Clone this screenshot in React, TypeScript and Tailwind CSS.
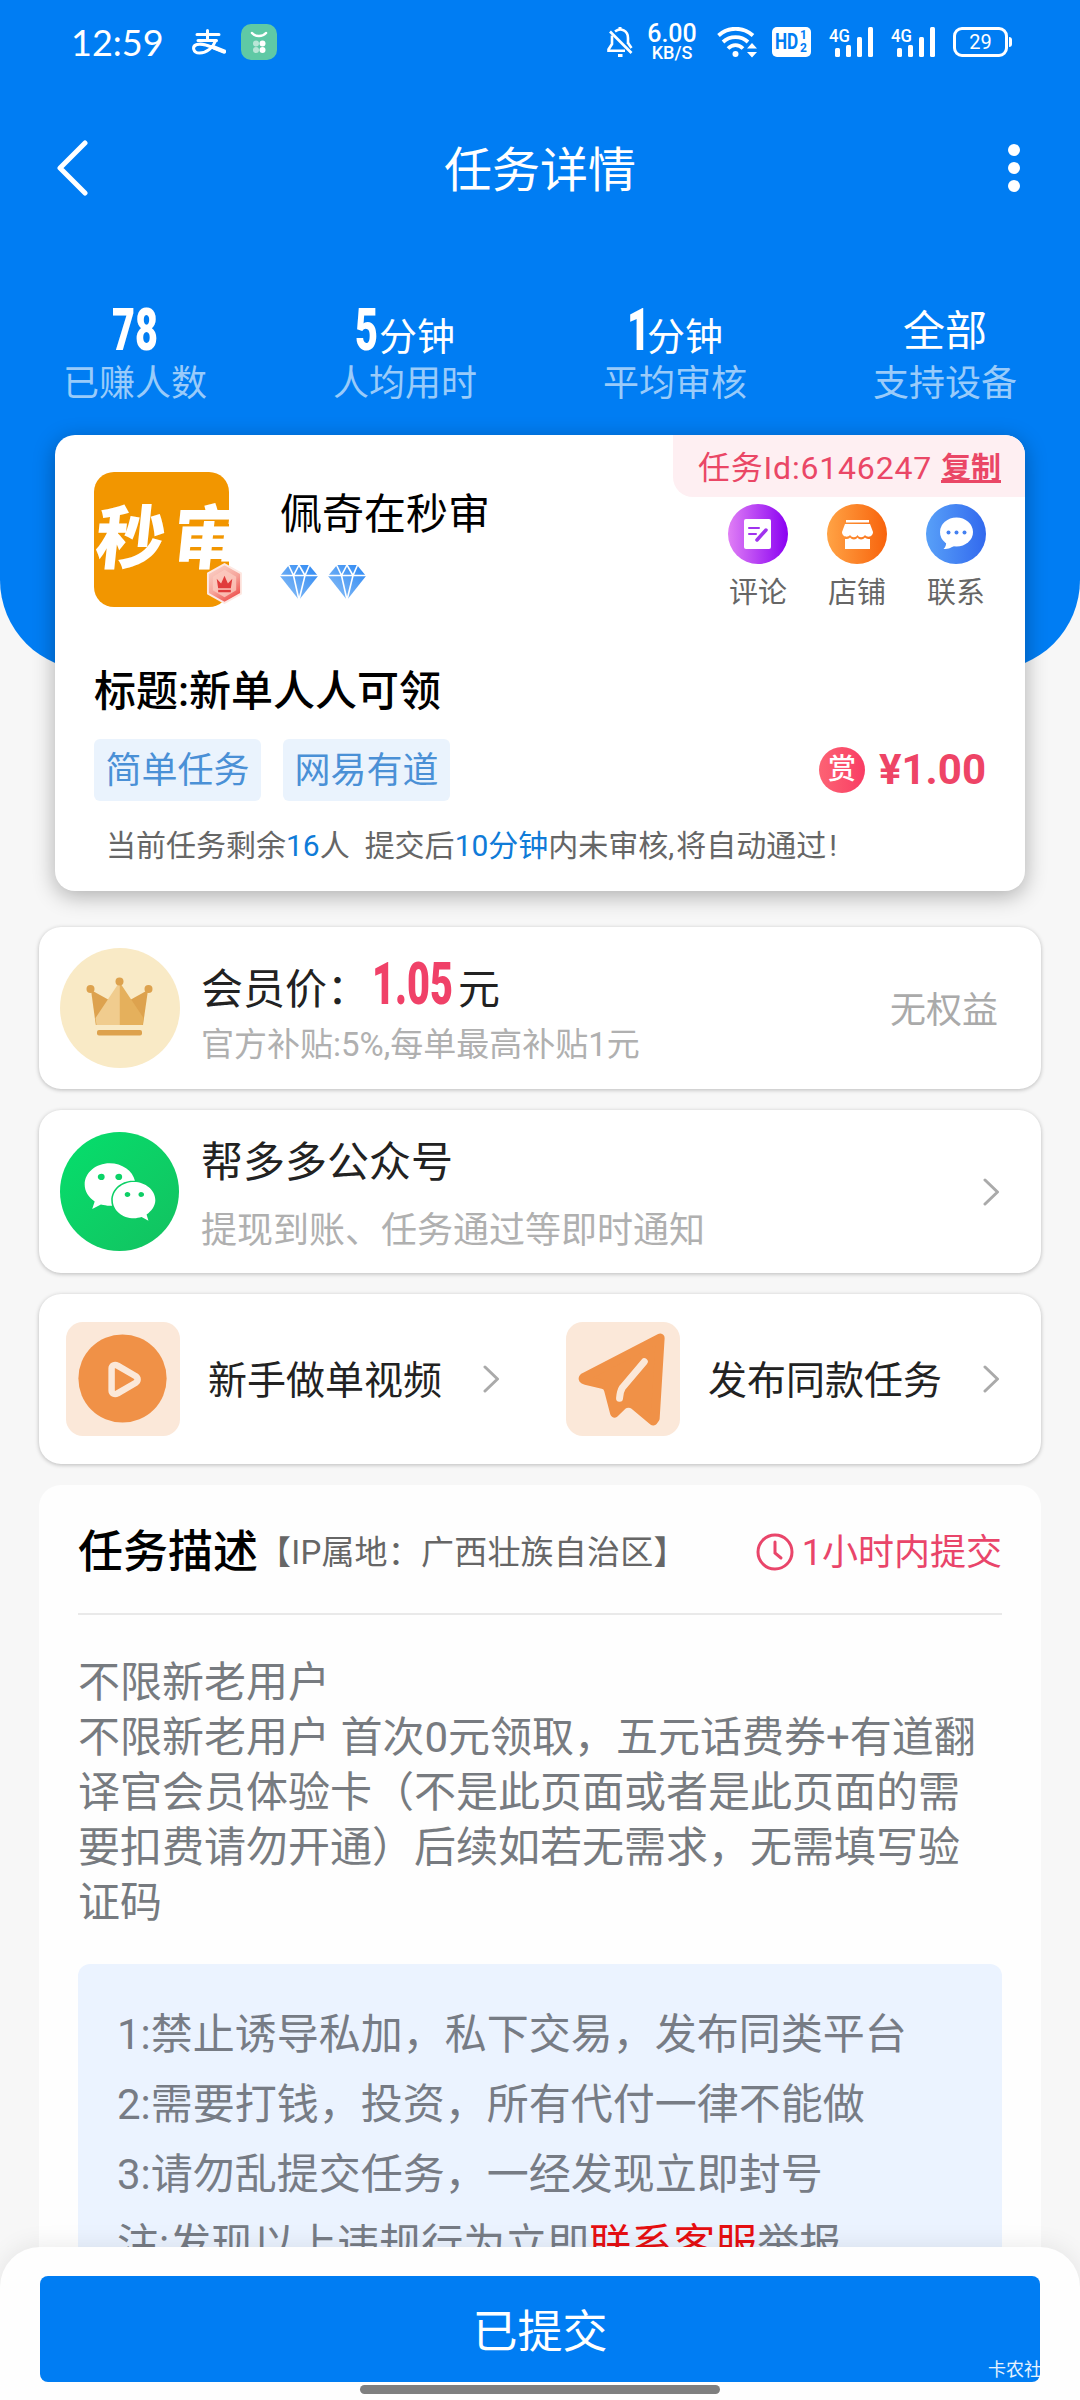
import { ReactNode } from "react";
import { FaWeixin } from "react-icons/fa";

const stats = [
  { num: "78", unit: "", label: "已赚人数", width: "w-[47px]" },
  { num: "5", unit: "分钟", label: "人均用时", width: "w-[24px]" },
  { num: "1", unit: "分钟", label: "平均审核", width: "w-[20px]" },
  { num: "", unit: "全部", label: "支持设备", width: "" },
];

const rules = [
  "1:禁止诱导私加，私下交易，发布同类平台",
  "2:需要打钱，投资，所有代付一律不能做",
  "3:请勿乱提交任务，一经发现立即封号",
];

const description = [
  "不限新老用户",
  "不限新老用户 首次0元领取，五元话费券+有道翻",
  "译官会员体验卡（不是此页面或者是此页面的需",
  "要扣费请勿开通）后续如若无需求，无需填写验",
  "证码",
];

const SignalIcon = () => (
  <div className="relative h-[30px] w-[46px]">
    <span className="absolute top-[-1px] left-0 origin-left scale-x-[0.88] text-[19px] leading-[19px] font-medium">
      4G
    </span>
    <svg width="46" height="30" viewBox="0 0 46 30" fill="#fff">
      <rect x="6" y="21" width="5" height="9" rx="1.5" />
      <rect x="17" y="18" width="5" height="12" rx="1.5" />
      <rect x="28" y="10" width="5" height="20" rx="1.5" />
      <rect x="39" y="0" width="5" height="30" rx="1.5" />
    </svg>
  </div>
);

const StatusBar = () => (
  <div className="flex h-[84px] items-center pr-[68px] pl-[71px] text-white">
    <span className="w-[121px] font-['Lato'] text-[36px] leading-[44px]">
      12:59
    </span>
    <svg
      width="34"
      height="26"
      viewBox="0 0 34 26"
      fill="none"
      stroke="#fff"
      strokeWidth="3"
      strokeLinecap="round"
    >
      <path d="M15.500 1.500V11M5 5.500H27M6 11.500H24.500" />
      <path d="M23.500 12C21 18.500 15 24 7.500 24C1 24 -.5 17 5 15.500C13 13.500 20 19 32 22.500" />
      <path d="M22 18.500L32 22.500" strokeWidth="4.500" />
    </svg>
    <svg className="ml-[15px]" width="37" height="37" viewBox="0 0 37 37">
      <rect width="36" height="36" rx="10" fill="#5fc9a5" />
      <path
        d="M11 9C14.500 13 21.500 13 25 9"
        fill="none"
        stroke="#fff"
        strokeWidth="2.500"
        strokeLinecap="round"
      />
      <circle cx="15" cy="19.500" r="3" fill="#b9e6d7" />
      <circle cx="21.500" cy="19.500" r="3" fill="#fff" />
      <circle cx="15" cy="26" r="3" fill="#b9e6d7" />
      <circle cx="21.500" cy="26" r="3" fill="#fff" />
    </svg>
    <div className="ml-auto flex items-center">
      <svg
        width="26"
        height="32"
        viewBox="0 0 26 32"
        fill="none"
        stroke="#fff"
        strokeWidth="2.600"
      >
        <path d="M8 5.500C14 1 21 5 21 12V18M5 9.500V18L1.500 23.500V24.800H18" />
        <path d="M3 5.500L24.500 27" />
        <path d="M13 1V4M11 29.500H15.500" strokeWidth="3" />
        <path d="M21 17L24.500 22" />
      </svg>
      <div className="ml-[13px] flex w-[52px] flex-col items-center font-medium">
        <span className="text-[25px] leading-[21px]">6.00</span>
        <span className="text-[18px] leading-[17px]">KB/S</span>
      </div>
      <svg
        className="ml-[19px]"
        width="41"
        height="31"
        viewBox="0 0 41 31"
        fill="none"
        stroke="#fff"
        strokeWidth="3.800"
      >
        <path d="M1.500 8.500C11 -.5 26 -.5 36 8.500" />
        <path d="M6 15C13 8.500 24 8.500 31 15" />
        <path d="M11 21.500C15.500 17 21.500 17 26 21.500" />
        <circle cx="18.500" cy="27" r="3" fill="#fff" stroke="none" />
        <path d="M35 16L40 21.500H30ZM35 30.500L40 25H30Z" fill="#fff" stroke="none" />
      </svg>
      <div className="ml-[14px] flex h-[30px] w-[39px] items-center rounded-[5px] bg-white pl-[3px] text-[#007df3]">
        <span className="w-[25px] origin-left scale-x-[0.78] text-[22px] leading-[26px] font-bold">
          HD
        </span>
        <span className="flex flex-col text-[12px] leading-[13px] font-bold">
          <span>1</span>
          <span>2</span>
        </span>
      </div>
      <div className="ml-[18px] flex gap-[16px]">
        <SignalIcon />
        <SignalIcon />
      </div>
      <div className="ml-[16px] flex h-[30px] w-[55px] items-center justify-center rounded-[9px] border-[3px] border-white text-[20px] leading-none">
        29
      </div>
      <div className="ml-[1px] h-[10px] w-[3px] rounded-r bg-white" />
    </div>
  </div>
);

// tall narrow digits used for the headline numbers
const Condensed = ({
  children,
  className,
}: {
  children: ReactNode;
  className: string;
}) => (
  <span className={`inline-block whitespace-nowrap ${className}`}>
    <span className="inline-block origin-left scale-x-[0.66] text-[60px] leading-[60px] font-black">
      {children}
    </span>
  </span>
);

const Header = () => (
  <div className="h-[670px] shrink-0 rounded-b-[90px] bg-[#007df3] text-white">
    <StatusBar />
    <div className="flex h-[168px] items-center justify-between pr-[60px] pl-[56px]">
      <svg width="32" height="58" viewBox="0 0 32 58" fill="none">
        <path
          d="M29 4L4 29L29 54"
          stroke="#fff"
          strokeWidth="5"
          strokeLinecap="round"
          strokeLinejoin="round"
        />
      </svg>
      <h1 className="pt-[6px] pr-[16px] text-[48px]">任务详情</h1>
      <div className="flex flex-col gap-[6px]">
        <span className="size-[12px] rounded-full bg-white" />
        <span className="size-[12px] rounded-full bg-white" />
        <span className="size-[12px] rounded-full bg-white" />
      </div>
    </div>
    <div className="mt-[48px] grid grid-cols-4">
      {stats.map((s) => (
        <div key={s.label} className="flex flex-col items-center">
          <div className="flex h-[60px] items-baseline">
            {s.num ? (
              <>
                <Condensed className={s.width}>{s.num}</Condensed>
                {s.unit && <span className="text-[38px]">{s.unit}</span>}
              </>
            ) : (
              <span className="pt-[2px] text-[42px] leading-[60px]">
                {s.unit}
              </span>
            )}
          </div>
          <span className="pt-[2px] text-[36px] leading-[44px] text-[#99cbfa]">
            {s.label}
          </span>
        </div>
      ))}
    </div>
  </div>
);

const Diamond = () => (
  <svg width="38" height="36" viewBox="0 0 38 36">
    <defs>
      <linearGradient id="gem" x1="0" y1="1" x2="1" y2="0">
        <stop offset="0" stopColor="#8fc1f6" />
        <stop offset="1" stopColor="#2b87f3" />
      </linearGradient>
    </defs>
    <path d="M9 1H29L38 12L19 36L0 12Z" fill="url(#gem)" />
    <path
      d="M0 11.500H38M8 0L13.500 11.500L19 36L25 11.500L30 0M13.500 11.500L19 1L25 11.500"
      fill="none"
      stroke="#fff"
      strokeWidth="1.600"
    />
  </svg>
);

const CommentIcon = () => (
  <svg width="60" height="60" viewBox="0 0 60 60">
    <defs>
      <linearGradient id="purple">
        <stop offset="0" stopColor="#e07ff5" />
        <stop offset="1" stopColor="#8a00f2" />
      </linearGradient>
    </defs>
    <circle cx="30" cy="30" r="30" fill="url(#purple)" />
    <rect x="16" y="15" width="27" height="30" rx="2" fill="#fff" />
    <path
      d="M21 24H31M21 30H28"
      stroke="#a033ee"
      strokeWidth="2"
      strokeLinecap="round"
    />
    <path
      d="M38 26L29 36"
      stroke="#a033ee"
      strokeWidth="3.500"
      strokeLinecap="round"
    />
  </svg>
);

const ShopIcon = () => (
  <svg width="60" height="60" viewBox="0 0 60 60">
    <defs>
      <linearGradient id="orange">
        <stop offset="0" stopColor="#ffa345" />
        <stop offset="1" stopColor="#f8630c" />
      </linearGradient>
    </defs>
    <circle cx="30" cy="30" r="30" fill="url(#orange)" />
    <path d="M19 16H42V18.500H19Z" fill="#fff" />
    <path
      d="M18 20H43L46 28C46 33 40 34 38 31C36 34 32 34 30.500 31C29 34 25 34 23 31C21 34 15 33 15 28Z"
      fill="#fff"
    />
    <path
      d="M18 35C21 35 22 34.500 23 33.500C25 36 29 36 30.500 33.500C32 36 36 36 38 33.500C39 34.500 41 35 43 35V45H18Z"
      fill="#fff"
    />
  </svg>
);

const ChatIcon = () => (
  <svg width="60" height="60" viewBox="0 0 60 60">
    <defs>
      <linearGradient id="blue">
        <stop offset="0" stopColor="#58a0f8" />
        <stop offset="1" stopColor="#3269ee" />
      </linearGradient>
    </defs>
    <circle cx="30" cy="30" r="30" fill="url(#blue)" />
    <ellipse cx="30.500" cy="28" rx="16.500" ry="14.500" fill="#fff" />
    <path d="M20 37C20.500 41 19.500 43 17.500 45C23 45 26 43.500 29 41Z" fill="#fff" />
    <circle cx="22.500" cy="28.500" r="2" fill="#4480f0" />
    <circle cx="30.500" cy="28.500" r="2" fill="#4480f0" />
    <circle cx="38.500" cy="28.500" r="2" fill="#4480f0" />
  </svg>
);

const Badge = () => (
  <svg
    className="absolute -right-[14px] bottom-[2px]"
    width="37"
    height="43"
    viewBox="0 0 38 44"
  >
    <defs>
      <linearGradient id="hex" x1="0" y1="0" x2="0.600" y2="1">
        <stop offset="0" stopColor="#fbd9cf" />
        <stop offset=".6" stopColor="#f6a59b" />
        <stop offset="1" stopColor="#ee5350" />
      </linearGradient>
    </defs>
    <path
      d="M19 2L36 11.500V32.500L19 42L2 32.500V11.500Z"
      fill="url(#hex)"
      stroke="#fde8e2"
      strokeWidth="2"
      strokeLinejoin="round"
    />
    <path d="M19 8L31 15V29L19 36L7 29V15Z" fill="#fbcabf" opacity=".8" />
    <path d="M11 17L15.500 22L19 14L22.500 22L27 17L25.500 27H12.500Z" fill="#e03c3c" />
    <path d="M12.500 28.500H25.500V31H12.500Z" fill="#e03c3c" />
  </svg>
);

const actions = [
  { label: "评论", icon: <CommentIcon /> },
  { label: "店铺", icon: <ShopIcon /> },
  { label: "联系", icon: <ChatIcon /> },
];

const Tag = ({ children }: { children: ReactNode }) => (
  <span className="flex h-[62px] items-center rounded-[6px] bg-[#eaf3fd] px-[11.5px] pt-[2px] text-[36px] leading-none text-[#4a90d6]">
    {children}
  </span>
);

const TaskCard = () => (
  <div className="relative mx-[55px] -mt-[235px] h-[456px] shrink-0 rounded-[20px] bg-white pl-[39px] shadow-[0_5px_22px_rgba(0,0,0,0.3)]">
    <div className="flex">
      <div className="relative mt-[37px] size-[135px] rounded-[20px] bg-[#f29600]">
        <div className="size-full overflow-hidden rounded-[20px] pt-[35px] pl-[2px]">
          <div className="-skew-x-6 text-[69px] leading-[66px] font-black tracking-[8px] whitespace-nowrap text-white">
            秒审
          </div>
        </div>
        <Badge />
      </div>
      <div className="ml-[51px] pt-[56px]">
        <div className="text-[42px] leading-[48px] text-black">佩奇在秒审</div>
        <div className="mt-[25px] flex gap-[10px]">
          <Diamond />
          <Diamond />
        </div>
      </div>
      <div className="ml-auto flex flex-col items-end">
        <div className="flex h-[62px] w-[352px] items-center rounded-tr-[20px] rounded-bl-[20px] bg-[#feeff2] pt-[3px] pl-[25px] text-[32px] leading-none text-[#ea4766]">
          <span className="tracking-[0.8px]">任务Id:6146247</span>
          <span className="ml-[9px] text-[30px] font-bold underline">复制</span>
        </div>
        <div className="mt-[7px] mr-[39px] flex gap-[39px]">
          {actions.map((a) => (
            <div key={a.label} className="flex flex-col items-center">
              {a.icon}
              <span className="mt-[10px] text-[29px] leading-[38px] text-[#666]">
                {a.label}
              </span>
            </div>
          ))}
        </div>
      </div>
    </div>
    <h2 className="mt-[54px] text-[42px] leading-[52px] font-medium text-black">
      标题:新单人人可领
    </h2>
    <div className="mt-[21px] flex items-center gap-[22px] pr-[39px]">
      <Tag>简单任务</Tag>
      <Tag>网易有道</Tag>
      <div className="ml-auto flex size-[46px] items-center justify-center rounded-full bg-linear-to-r from-[#fc6274] to-[#f93c64] text-[28px] leading-none font-medium text-white">
        赏
      </div>
      <span className="-ml-[8px] text-[42px] leading-none font-bold text-[#ee4466]">
        ¥1.00
      </span>
    </div>
    <p className="mt-[25px] pl-[12px] text-[30px] leading-[40px] whitespace-pre text-[#666]">
      当前任务剩余<span className="text-[#0f7bd8]">16</span>人{"  "}提交后
      <span className="text-[#0f7bd8]">10分钟</span>内未审核
      <span className="tracking-[2px]">,</span>将自动通过
      <span className="pl-[3px]">!</span>
    </p>
  </div>
);

const Chevron = () => (
  <svg width="17" height="28" viewBox="0 0 17 28" fill="none">
    <path
      d="M2 2L14.500 14L2 26"
      stroke="#aaa"
      strokeWidth="3"
      strokeLinecap="round"
      strokeLinejoin="round"
    />
  </svg>
);

const CrownIcon = () => (
  <svg width="120" height="120" viewBox="0 0 120 120">
    <circle cx="60" cy="60" r="60" fill="#f9eac6" />
    <path d="M31 42L49 52L42 77H35.800Z" fill="#dda24e" />
    <path d="M88 42L70 52L77 77H83Z" fill="#dda24e" />
    <path d="M59.500 34L35.500 70L36.500 77H59.500Z" fill="#f0cc8e" />
    <path d="M59.500 34L83.500 70L82.500 77H59.500Z" fill="#e5b05c" />
    <circle cx="30.500" cy="41" r="4" fill="#dda24e" />
    <circle cx="59.500" cy="33.500" r="4" fill="#dda24e" />
    <circle cx="88.500" cy="41" r="4" fill="#dda24e" />
    <rect x="37" y="82" width="45" height="5.500" rx="2" fill="#dda24e" />
  </svg>
);

const PlayIcon = () => (
  <svg width="114" height="114" viewBox="0 0 115 115">
    <rect width="115" height="115" rx="17" fill="#fbe8d9" />
    <circle cx="57" cy="57" r="44.500" fill="#f09147" />
    <path
      d="M46 47C46 44 49 42.500 52 44L70 54.500C73 56.500 73 59.500 70 61.500L52 72C49 73.500 46 72 46 69Z"
      fill="none"
      stroke="#fbe8d9"
      strokeWidth="6.500"
      strokeLinejoin="round"
    />
  </svg>
);

const PlaneIcon = () => (
  <svg width="114" height="114" viewBox="0 0 115 115">
    <rect width="115" height="115" rx="17" fill="#fbe8d9" />
    <path
      d="M95 16L18 56Q16 58 20 59L37 63Q42 64 43 69L49 92L57 84Q63 80 69 84L88 100L90 97Z"
      fill="#f09147"
      stroke="#f09147"
      strokeWidth="9"
      strokeLinejoin="round"
    />
    <path
      d="M79 40L57 66Q54.500 70 54 77"
      fill="none"
      stroke="#fbe8d9"
      strokeWidth="7"
      strokeLinecap="round"
    />
  </svg>
);

const Panel = ({
  children,
  className,
}: {
  children: ReactNode;
  className: string;
}) => (
  <div
    className={`mx-[39px] flex shrink-0 items-center rounded-[22px] bg-white shadow-[0_1px_4px_rgba(0,0,0,0.25)] ${className}`}
  >
    {children}
  </div>
);

const Description = () => (
  <div className="mx-[39px] mt-[21px] h-[900px] shrink-0 rounded-t-[22px] bg-[#fefefe] px-[39px]">
    <div className="flex h-[130px] items-center border-b-2 border-[#e9e9e9] pt-[6px]">
      <h3 className="text-[45px] leading-none font-medium text-black">
        任务描述
      </h3>
      <span className="text-[33px] leading-none tracking-[0.2px] whitespace-nowrap text-[#666]">
        【IP属地：广西壮族自治区】
      </span>
      <svg
        className="ml-auto"
        width="38"
        height="38"
        viewBox="0 0 38 38"
        fill="none"
        stroke="#e9456a"
        strokeWidth="3"
        strokeLinecap="round"
      >
        <circle cx="19" cy="19" r="17" />
        <path d="M19 9V20L25 25" />
      </svg>
      <span className="ml-[8px] pt-[2px] text-[36px] leading-none text-[#e9456a]">
        1小时内提交
      </span>
    </div>
    <div className="mt-[40px] text-[42px] leading-[55px] whitespace-pre text-[#777b80]">
      {description.map((line) => (
        <p key={line}>{line}</p>
      ))}
    </div>
    <div className="mt-[34px] h-[400px] rounded-[12px] bg-[#ebf3ff] pt-[36px] pl-[39px] text-[42px] leading-[70px] whitespace-nowrap text-[#777c85]">
      {rules.map((rule) => (
        <p key={rule}>{rule}</p>
      ))}
      <p>
        注:发现以上违规行为立即<span className="text-[#e60f12]">联系客服</span>
        举报
      </p>
    </div>
  </div>
);

const Footer = () => (
  <div className="relative -mt-[40px] h-[153px] rounded-t-[40px] bg-[#fefefe] px-[40px] pt-[29px] shadow-[0_-2px_24px_rgba(0,0,0,0.08)]">
    <button className="relative flex h-[106px] w-full items-center justify-center rounded-[8px] bg-[#007df3] pt-[7px] text-[45px] leading-none text-white">
      已提交
      <span className="absolute right-[-2px] bottom-[3px] text-[18px] leading-none text-white/90">
        卡农社
      </span>
    </button>
    <div className="mx-auto mt-[3px] h-[9px] w-[360px] rounded-full bg-[#7f7f7f]" />
  </div>
);

export default function App() {
  return (
    <div className="h-[2400px] w-[1080px] overflow-hidden bg-[#f7f7f7] font-['Roboto','Noto_Sans_CJK_SC',sans-serif]">
      <div className="flex h-[2287px] flex-col overflow-hidden">
        <Header />
        <TaskCard />

        <Panel className="mt-[36px] h-[162px] pr-[43px] pl-[21px]">
          <CrownIcon />
          <div className="ml-[21px] pt-[6px]">
            <div className="flex h-[66px] items-baseline text-[42px] text-[#222]">
              会员价：
              <Condensed className="ml-[3px] w-[86px] text-[#f04168]">
                1.05
              </Condensed>
              元
            </div>
            <div className="pt-[2px] text-[33px] leading-[46px] text-[#b0b0b0]">
              官方补贴:5%,每单最高补贴1元
            </div>
          </div>
          <span className="ml-auto pt-[6px] text-[36px] text-[#aaa]">
            无权益
          </span>
        </Panel>

        <Panel className="mt-[21px] h-[163px] pr-[41px] pl-[21px]">
          <div className="flex size-[119px] items-center justify-center rounded-full bg-linear-to-br from-[#04df6c] to-[#12c160] text-[74px] text-white">
            <FaWeixin />
          </div>
          <div className="ml-[22px] pt-[7px]">
            <div className="text-[42px] leading-[60px] text-[#222]">
              帮多多公众号
            </div>
            <div className="mt-[11px] text-[36px] leading-[54px] text-[#b0b0b0]">
              提现到账、任务通过等即时通知
            </div>
          </div>
          <span className="ml-auto">
            <Chevron />
          </span>
        </Panel>

        <Panel className="mt-[21px] h-[170px] pr-[41px] pl-[27px] text-[39px] text-[#222]">
          <PlayIcon />
          <span className="ml-[28px] pt-[4px]">新手做单视频</span>
          <span className="ml-[41px]">
            <Chevron />
          </span>
          <span className="ml-auto">
            <PlaneIcon />
          </span>
          <span className="ml-[28px] pt-[4px]">发布同款任务</span>
          <span className="ml-[41px]">
            <Chevron />
          </span>
        </Panel>

        <Description />
      </div>
      <Footer />
    </div>
  );
}
